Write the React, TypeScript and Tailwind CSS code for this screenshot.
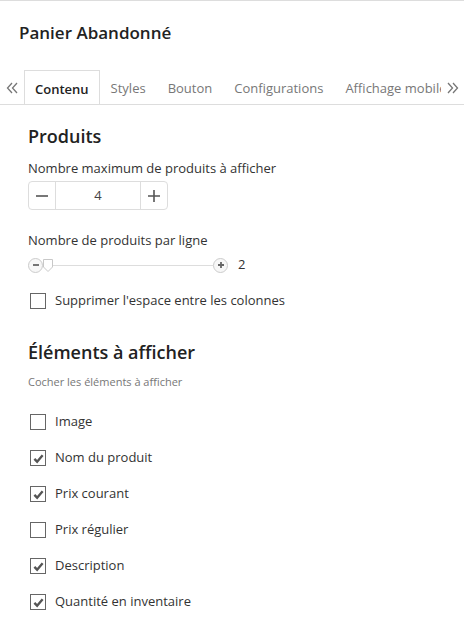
import React, { useState } from 'react';

const font = { fontFamily: '"Open Sans", "Noto Sans", sans-serif' };

const Check: React.FC<{ checked: boolean; label: string; onToggle: () => void }> = ({ checked, label, onToggle }) => (
  <label className="flex items-center h-[18px] cursor-pointer select-none" onClick={onToggle}>
    <span className="w-[16px] h-[16px] border border-[#666] bg-white flex items-center justify-center ml-[2px]">
      {checked && (
        <svg width="11" height="11" viewBox="0 0 12 12">
          <path d="M1.5 6.5 L4.5 9.5 L10.5 2.5" fill="none" stroke="#555" strokeWidth="2.6" />
        </svg>
      )}
    </span>
    <span className="ml-[9px] text-[13px] text-[#333]">{label}</span>
  </label>
);

const Chevrons: React.FC<{ dir: 'left' | 'right' }> = ({ dir }) => (
  <svg width="12" height="12" viewBox="0 0 12 12" className={dir === 'right' ? 'rotate-180' : ''}>
    <path d="M6 1 L1.5 6 L6 11 M11 1 L6.5 6 L11 11" fill="none" stroke="#777" strokeWidth="1.3" />
  </svg>
);

export default function App() {
  const [count, setCount] = useState(4);
  const [noGap, setNoGap] = useState(false);
  const [items, setItems] = useState([
    { label: 'Image', checked: false },
    { label: 'Nom du produit', checked: true },
    { label: 'Prix courant', checked: true },
    { label: 'Prix régulier', checked: false },
    { label: 'Description', checked: true },
    { label: 'Quantité en inventaire', checked: true },
  ]);

  const tabs = ['Contenu', 'Styles', 'Bouton', 'Configurations', 'Affichage mobile'];

  return (
    <div className="w-[464px] h-[624px] bg-white border-t border-[#dddddd] overflow-hidden text-[#333]" style={font}>
      {/* header */}
      <div className="h-[69px] pl-[19px] flex items-center pb-[6px]">
        <h1 className="text-[17px] font-semibold text-[#222]">Panier Abandonné</h1>
      </div>

      {/* tabs */}
      <div className="relative h-[35px] border-b border-[#dddddd] flex items-stretch">
        <span className="w-[24px] flex items-center justify-center pt-[2px]">
          <Chevrons dir="left" />
        </span>
        <div className="flex items-stretch overflow-hidden w-[417px] text-[13px]">
          {tabs.map((t, i) => (
            <div
              key={t}
              className={
                i === 0
                  ? 'px-[10px] pt-[3px] flex items-center border border-b-0 border-[#dddddd] bg-white text-[#222] font-semibold -mb-px whitespace-nowrap'
                  : 'px-[11px] pt-[3px] flex items-center text-[#777] whitespace-nowrap'
              }
            >
              {t}
            </div>
          ))}
        </div>
        <span className="w-[23px] flex items-center justify-center pt-[2px]">
          <Chevrons dir="right" />
        </span>
      </div>

      {/* body */}
      <div className="pl-[28px] pr-[20px]">
        <h2 className="text-[18px] font-semibold text-[#222] mt-[18px] leading-[26px]">Produits</h2>

        <div className="mt-[10px] text-[13px] leading-[18px]">Nombre maximum de produits à afficher</div>
        <div className="mt-[4px] flex w-[140px] h-[29px] border border-[#dddddd] rounded-[4px]">
          <button onClick={() => setCount(Math.max(0, count - 1))} className="w-[27px] flex items-center justify-center border-r border-[#dddddd] text-[#555]">
            <svg width="12" height="12" viewBox="0 0 12 12"><path d="M0 6 H12" stroke="#555" strokeWidth="1.6" /></svg>
          </button>
          <div className="flex-1 flex items-center justify-center text-[13px] text-[#444]">{count}</div>
          <button onClick={() => setCount(count + 1)} className="w-[27px] flex items-center justify-center border-l border-[#dddddd] text-[#555]">
            <svg width="12" height="12" viewBox="0 0 12 12"><path d="M0 6 H12 M6 0 V12" stroke="#555" strokeWidth="1.6" /></svg>
          </button>
        </div>

        <div className="mt-[21px] text-[13px] leading-[18px]">Nombre de produits par ligne</div>
        <div className="mt-[8px] flex items-center h-[16px]">
          <span className="w-[15px] h-[15px] rounded-full border border-[#cccccc] bg-[#f7f7f7] flex items-center justify-center">
            <svg width="8" height="8" viewBox="0 0 8 8"><path d="M1 4 H7" stroke="#666" strokeWidth="1.8" /></svg>
          </span>
          <div className="relative w-[170px] h-px bg-[#dddddd]">
            <svg className="absolute left-[0px] top-[-6px]" width="10" height="13" viewBox="0 0 10 13">
              <path d="M0.5 0.5 H9.5 V8 L5 12.5 L0.5 8 Z" fill="#fff" stroke="#c8c8c8" />
            </svg>
          </div>
          <span className="w-[15px] h-[15px] rounded-full border border-[#cccccc] bg-[#f7f7f7] flex items-center justify-center">
            <svg width="8" height="8" viewBox="0 0 8 8"><path d="M1 4 H7 M4 1 V7" stroke="#666" strokeWidth="1.8" /></svg>
          </span>
          <span className="ml-[10px] text-[13px] text-[#333]">2</span>
        </div>

        <div className="mt-[19px]">
          <Check checked={noGap} label="Supprimer l'espace entre les colonnes" onToggle={() => setNoGap(!noGap)} />
        </div>

        <h2 className="text-[18px] font-semibold text-[#222] mt-[29px] leading-[26px]">Éléments à afficher</h2>
        <div className="mt-[9px] text-[11px] text-[#777] leading-[16px]">Cocher les éléments à afficher</div>

        <div className="mt-[23px] flex flex-col gap-[18px]">
          {items.map((it, i) => (
            <Check
              key={it.label}
              checked={it.checked}
              label={it.label}
              onToggle={() => setItems(items.map((x, j) => (j === i ? { ...x, checked: !x.checked } : x)))}
            />
          ))}
        </div>
      </div>
    </div>
  );
}
